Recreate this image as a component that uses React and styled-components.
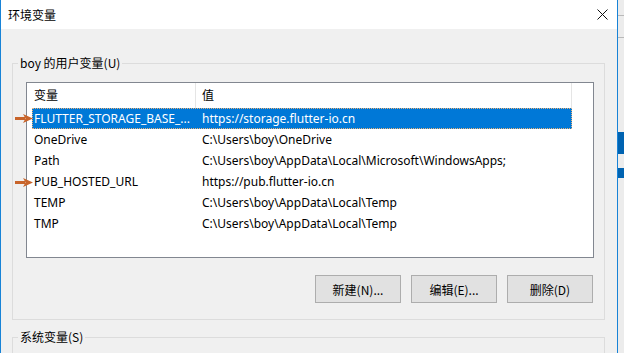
import React from 'react';
import styled, { createGlobalStyle } from 'styled-components';

const GlobalStyle = createGlobalStyle`
  html, body {
    margin: 0;
    padding: 0;
    background: #ffffff;
  }
  body {
    font-family: "Noto Sans", "Noto Sans CJK SC", sans-serif;
    font-size: 12px;
    color: #000000;
  }
`

const Screen = styled.div`
width: 624px;
height: 353px;
overflow: hidden;
display: flex;
`

const Dialog = styled.div`
width: 618px;
height: 100%;
box-sizing: border-box;
border-left: 1px solid #1883d7;
border-right: 1px solid #1883d7;
background-color: #f0f0f0;
display: flex;
flex-direction: column;
`

const TitleBar = styled.div`
height: 29px;
flex-shrink: 0;
background-color: #ffffff;
display: flex;
align-items: center;
justify-content: space-between;
padding: 0 9px 0 7px;
font-family: "Noto Sans CJK SC", sans-serif;
font-size: 12px;
`

const CloseButton = styled.div`
width: 12px;
height: 12px;
display: flex;
align-items: center;
justify-content: center;
margin-top: -1px;
`

const Body = styled.div`
padding: 26px 12px 0 11px;
display: flex;
flex-direction: column;
`

const Group = styled.fieldset`
margin: ${({ $gap }) => $gap || 0}px 0 0 0;
border: 1px solid #dcdcdc;
padding: 11px 10px 16px 13px;
min-width: 0;
position: relative;
min-height: ${({ $tall }) => ($tall ? '120px' : 'auto')};
`

const Legend = styled.legend`
font-family: "Noto Sans CJK SC", sans-serif;
font-size: 12px;
line-height: 16px;
padding: 0 2px;
margin-left: -8px;
`

const ListBox = styled.div`
width: 568px;
height: 176px;
box-sizing: border-box;
border: 1px solid #828790;
background-color: #ffffff;
padding-left: 5px;
`

const Line = styled.div`
display: grid;
grid-template-columns: 164px 376px;
width: 540px;
height: ${({ $header }) => ($header ? 25 : 21)}px;
line-height: ${({ $header }) => ($header ? 24 : 21)}px;
background-color: ${({ $selected }) => ($selected ? '#0078d7' : 'transparent')};
color: ${({ $selected }) => ($selected ? '#ffffff' : '#000000')};
outline: ${({ $selected }) => ($selected ? '1px dotted #e9b27a' : 'none')};
outline-offset: -1px;
white-space: nowrap;
`

const Cell = styled.div`
padding-left: ${({ $first }) => ($first ? 2 : 6)}px;
overflow: hidden;
border-right: ${({ $header }) => ($header ? '1px solid #e5e5e5' : 'none')};
font-family: ${({ $header }) => ($header ? '"Noto Sans CJK SC", sans-serif' : 'inherit')};
`

const Marker = styled.svg`
position: absolute;
left: 2px;
top: ${({ $top }) => $top}px;
`

const ButtonRow = styled.div`
display: flex;
justify-content: flex-end;
gap: 10px;
margin-top: 17px;
padding-right: 1px;
`

const Button = styled.button`
width: 86px;
height: 28px;
box-sizing: border-box;
border: 1px solid #adadad;
background-color: #e1e1e1;
font-family: "Noto Sans CJK SC", sans-serif;
font-size: 12px;
color: #000000;
padding: 0;
`

const Backdrop = styled.div`
flex: 1;
background-color: #ececec;
display: flex;
flex-direction: column;
`

const BackdropPiece = styled.div`
height: ${({ $h }) => $h}px;
background-color: ${({ $color }) => $color || 'transparent'};
flex-shrink: 0;
`

const variables = [
  { name: 'FLUTTER_STORAGE_BASE_...', value: 'https://storage.flutter-io.cn' },
  { name: 'OneDrive', value: 'C:\\Users\\boy\\OneDrive' },
  { name: 'Path', value: 'C:\\Users\\boy\\AppData\\Local\\Microsoft\\WindowsApps;' },
  { name: 'PUB_HOSTED_URL', value: 'https://pub.flutter-io.cn' },
  { name: 'TEMP', value: 'C:\\Users\\boy\\AppData\\Local\\Temp' },
  { name: 'TMP', value: 'C:\\Users\\boy\\AppData\\Local\\Temp' },
]

function ArrowMarker ({ top }) {
  return (
    <Marker $top={top} width="18" height="9" viewBox="0 0 18 9">
      <path d="M0 4.5 H10" stroke="#c8642a" strokeWidth="3" />
      <path d="M8 0 L18 4.5 L8 9 L10.5 4.5 Z" fill="#c8642a" />
    </Marker>
  )
}

export default function App () {
  return (
    <Screen>
      <GlobalStyle />
      <Dialog>
        <TitleBar>
          <span>环境变量</span>
          <CloseButton>
            <svg width="11" height="11" viewBox="0 0 11 11">
              <path d="M0.5 0.5 L10.5 10.5 M10.5 0.5 L0.5 10.5" stroke="#111" strokeWidth="1" />
            </svg>
          </CloseButton>
        </TitleBar>
        <Body>
          <Group>
            <Legend>boy 的用户变量(U)</Legend>
            <ListBox>
              <Line $header>
                <Cell $header $first>变量</Cell>
                <Cell $header>值</Cell>
              </Line>
              {variables.map((item, index) =>
                // eslint-disable-next-line react/no-array-index-key
                <Line key={index} $selected={index === 0}>
                  <Cell $first>{item.name}</Cell>
                  <Cell>{item.value}</Cell>
                </Line>)}
            </ListBox>
            <ArrowMarker top={43} />
            <ArrowMarker top={107} />
            <ButtonRow>
              <Button type="button">新建(N)...</Button>
              <Button type="button">编辑(E)...</Button>
              <Button type="button">删除(D)</Button>
            </ButtonRow>
          </Group>
          <Group $gap={9} $tall>
            <Legend>系统变量(S)</Legend>
          </Group>
        </Body>
      </Dialog>
      <Backdrop>
        <BackdropPiece $h={15} />
        <BackdropPiece $h={1} $color="#b9b9b9" />
        <BackdropPiece $h={21} />
        <BackdropPiece $h={1} $color="#b9b9b9" />
        <BackdropPiece $h={94} />
        <BackdropPiece $h={22} $color="#0063b1" />
        <BackdropPiece $h={14} />
        <BackdropPiece $h={10} $color="#0063b1" />
      </Backdrop>
    </Screen>
  )
}
